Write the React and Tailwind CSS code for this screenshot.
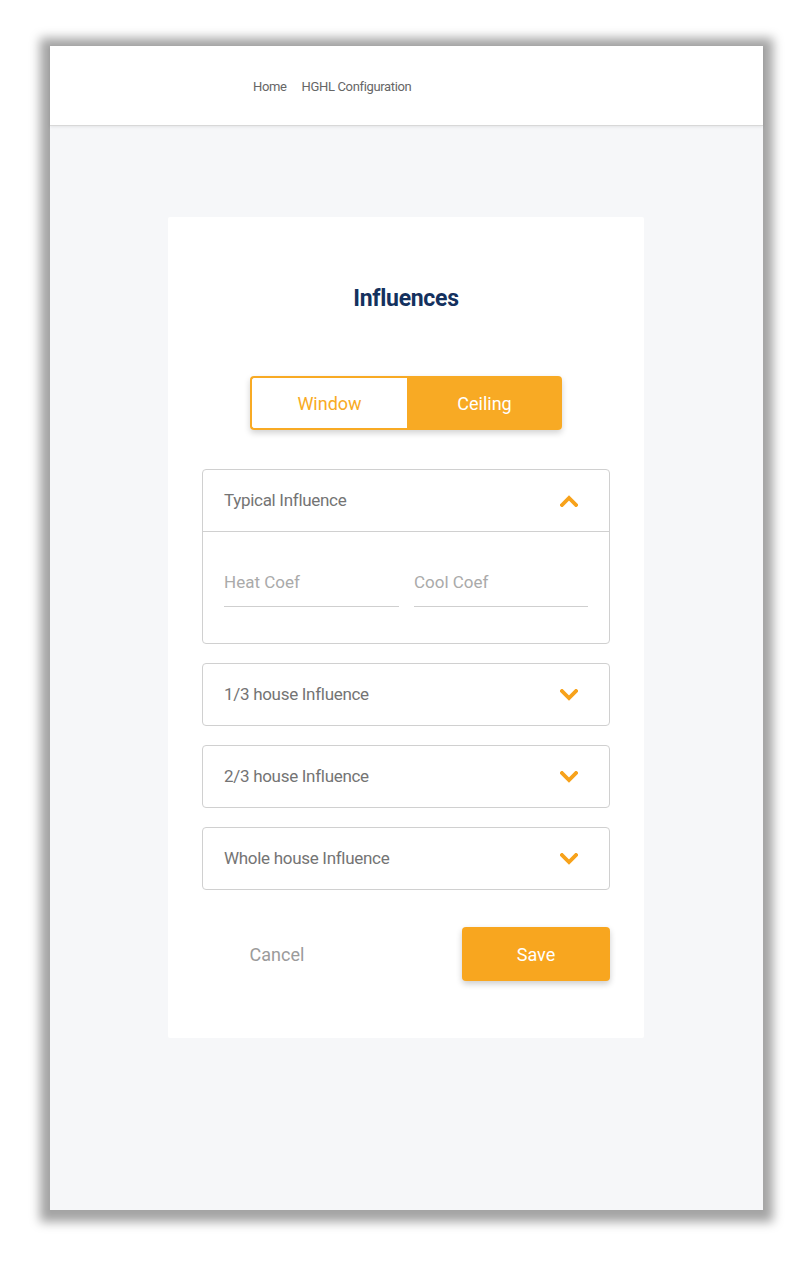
import { useState } from 'react'

const sections = [
  { key: 'typical', label: 'Typical Influence' },
  { key: 'third', label: '1/3 house Influence' },
  { key: 'twothirds', label: '2/3 house Influence' },
  { key: 'whole', label: 'Whole house Influence' },
]

function Chevron({ up }) {
  return (
    <svg width="18" height="12" viewBox="0 0 18 12" aria-hidden="true">
      <polyline
        points={up ? '2,10 9,3 16,10' : '2,2 9,9 16,2'}
        fill="none"
        stroke="#f7a21b"
        strokeWidth="3.8"
        strokeLinecap="square"
        strokeLinejoin="miter"
      />
    </svg>
  )
}

function CoefInput({ placeholder }) {
  return (
    <div className="border-b border-[#cfcfcf] pb-[11px]">
      <input
        type="text"
        placeholder={placeholder}
        className="w-full bg-transparent text-[17px] leading-6 text-[#777] placeholder:text-[#aaaaaa] outline-none"
      />
    </div>
  )
}

function Section({ label, open, onToggle }) {
  return (
    <div className="rounded-[4px] border border-[#d0d0d0] bg-white">
      <button
        type="button"
        onClick={onToggle}
        className="flex h-[61px] w-full items-center justify-between pl-[21px] pr-[31px] text-left"
      >
        <span className="text-[17px] tracking-[-0.3px] text-[#747474]">{label}</span>
        <Chevron up={open} />
      </button>
      {open && (
        <div className="border-t border-[#d0d0d0] px-[21px] pt-[38px] pb-[36px]">
          <div className="grid grid-cols-[175px_174px] gap-x-[15px]">
            <CoefInput placeholder="Heat Coef" />
            <CoefInput placeholder="Cool Coef" />
          </div>
        </div>
      )}
    </div>
  )
}

export default function App() {
  const [tab, setTab] = useState('ceiling')
  const [openKey, setOpenKey] = useState('typical')

  return (
    <div
      className="h-[1269px] w-[800px] bg-white pl-[50px] pt-[46px]"
      style={{ fontFamily: 'Roboto, "Noto Sans", sans-serif' }}
    >
      <div className="flex h-[1164px] w-[713px] flex-col bg-[#f6f7f9] shadow-[0_2px_10px_10px_rgba(0,0,0,0.36)]">
        <header className="flex h-[80px] items-center border-b border-[#d8d8d8] bg-white pt-[2px] pl-[203px] shadow-[0_1px_3px_rgba(0,0,0,0.08)]">
          <nav className="flex gap-x-[15px] text-[13px] tracking-[-0.35px] text-[#666]">
            <a href="#">Home</a>
            <a href="#">HGHL Configuration</a>
          </nav>
        </header>

        <main className="flex flex-1 justify-center pt-[91px] pr-[1px]">
          <div className="flex h-[821px] w-[476px] flex-col rounded-[2px] bg-white px-[34px] pt-[66px]">
            <h1 className="text-center text-[23px] font-bold leading-8 tracking-[-0.3px] text-[#14315e]">
              Influences
            </h1>

            <div className="mx-auto mt-[61px] flex h-[54px] w-[312px] rounded-[4px] shadow-[0_3px_6px_rgba(0,0,0,0.18)]">
              <button
                type="button"
                onClick={() => setTab('window')}
                className={
                  tab === 'window'
                    ? 'flex-1 rounded-l-[4px] bg-[#f8aa24] text-[18px] text-white'
                    : 'flex-1 rounded-l-[4px] border-2 border-r-0 border-[#f8aa24] bg-white text-[18px] text-[#f8aa24]'
                }
              >
                Window
              </button>
              <button
                type="button"
                onClick={() => setTab('ceiling')}
                className={
                  tab === 'ceiling'
                    ? 'flex-1 rounded-r-[4px] bg-[#f8aa24] text-[18px] text-white'
                    : 'flex-1 rounded-r-[4px] border-2 border-l-0 border-[#f8aa24] bg-white text-[18px] text-[#f8aa24]'
                }
              >
                Ceiling
              </button>
            </div>

            <div className="mt-[39px] flex flex-col gap-y-[19px]">
              {sections.map((s) => (
                <Section
                  key={s.key}
                  label={s.label}
                  open={openKey === s.key}
                  onToggle={() => setOpenKey(openKey === s.key ? null : s.key)}
                />
              ))}
            </div>

            <div className="mt-[37px] flex items-center justify-between">
              <button type="button" className="w-[148px] pl-[2px] text-[18px] text-[#9b9b9b]">
                Cancel
              </button>
              <button
                type="button"
                className="h-[54px] w-[148px] rounded-[4px] bg-[#f8a61f] text-[18px] text-white shadow-[0_3px_6px_rgba(0,0,0,0.2)]"
              >
                Save
              </button>
            </div>
          </div>
        </main>
      </div>
    </div>
  )
}
